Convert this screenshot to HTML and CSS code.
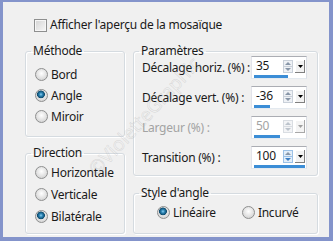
FILE: index.html
```html
<!DOCTYPE html>
<html lang="fr">
<head>
<meta charset="utf-8">
<title>Mosaïque</title>
<link rel="stylesheet" href="styles.css">
</head>
<body>
<div class="window">
  <label class="check-row"><span class="checkbox"></span><span>Afficher l'aperçu de la mosaïque</span></label>
  <div class="main">
    <div class="col col-left">
      <fieldset class="group methode">
        <legend>Méthode</legend>
        <div class="inner">
          <div class="opt"><span class="radio"></span>Bord</div>
          <div class="opt"><span class="radio on"></span>Angle</div>
          <div class="opt"><span class="radio"></span>Miroir</div>
        </div>
      </fieldset>
      <fieldset class="group direction">
        <legend>Direction</legend>
        <div class="inner">
          <div class="opt"><span class="radio"></span>Horizontale</div>
          <div class="opt"><span class="radio"></span>Verticale</div>
          <div class="opt"><span class="radio on"></span>Bilatérale</div>
        </div>
      </fieldset>
    </div>
    <div class="col col-right">
      <fieldset class="group params">
        <legend>Paramètres</legend>
        <div class="inner rows">
          <div class="row">
            <span class="lbl">Décalage horiz. (%) :</span>
            <div class="spin">
              <div class="spin-top"><span class="val">35</span>
                <svg class="arrows" width="10" height="13" viewBox="0 0 10 13"><rect x="0.5" y="0.5" width="9" height="12" fill="#eef1f5" stroke="#c9d0d9"/><line x1="1" y1="6.5" x2="9" y2="6.5" stroke="#c9d0d9"/><path d="M5 2 L8 5 L2 5 Z" fill="#8796a8"/><path d="M2 8 L8 8 L5 11 Z" fill="#8796a8"/></svg>
                <svg class="drop" width="10" height="13" viewBox="0 0 10 13"><rect x="0" y="0" width="10" height="13" fill="#808080"/><rect x="0" y="0" width="9" height="12" fill="#fff"/><rect x="1" y="1" width="8" height="11" fill="#f2f2f2"/><path d="M3 5 L8 5 L5.5 8 Z" fill="#000"/></svg>
              </div>
              <div class="track"><div class="bar" style="width:67.5%"></div></div>
            </div>
          </div>
          <div class="row">
            <span class="lbl">Décalage vert. (%) :</span>
            <div class="spin">
              <div class="spin-top"><span class="val">-36</span>
                <svg class="arrows" width="10" height="13" viewBox="0 0 10 13"><rect x="0.5" y="0.5" width="9" height="12" fill="#eef1f5" stroke="#c9d0d9"/><line x1="1" y1="6.5" x2="9" y2="6.5" stroke="#c9d0d9"/><path d="M5 2 L8 5 L2 5 Z" fill="#8796a8"/><path d="M2 8 L8 8 L5 11 Z" fill="#8796a8"/></svg>
                <svg class="drop" width="10" height="13" viewBox="0 0 10 13"><rect x="0" y="0" width="10" height="13" fill="#808080"/><rect x="0" y="0" width="9" height="12" fill="#fff"/><rect x="1" y="1" width="8" height="11" fill="#f2f2f2"/><path d="M3 5 L8 5 L5.5 8 Z" fill="#000"/></svg>
              </div>
              <div class="track"><div class="bar" style="width:32%"></div></div>
            </div>
          </div>
          <div class="row disabled">
            <span class="lbl">Largeur (%) :</span>
            <div class="spin">
              <div class="spin-top"><span class="val">50</span>
                <svg class="arrows" width="10" height="13" viewBox="0 0 10 13"><rect x="0.5" y="0.5" width="9" height="12" fill="#f3f4f6" stroke="#d9dde2"/><line x1="1" y1="6.5" x2="9" y2="6.5" stroke="#d9dde2"/><path d="M5 2 L8 5 L2 5 Z" fill="#bcc3cc"/><path d="M2 8 L8 8 L5 11 Z" fill="#bcc3cc"/></svg>
                <svg class="drop" width="10" height="13" viewBox="0 0 10 13"><rect x="0" y="0" width="10" height="13" fill="#a8a8a8"/><rect x="0" y="0" width="9" height="12" fill="#fff"/><rect x="1" y="1" width="8" height="11" fill="#f4f4f4"/><path d="M3 5 L8 5 L5.5 8 Z" fill="#a0a0a0"/></svg>
              </div>
              <div class="track"><div class="bar" style="width:50%"></div></div>
            </div>
          </div>
          <div class="row">
            <span class="lbl">Transition (%) :</span>
            <div class="spin">
              <div class="spin-top"><span class="val">100</span>
                <svg class="arrows" width="10" height="13" viewBox="0 0 10 13"><rect x="0.5" y="0.5" width="9" height="12" fill="#e3eef9" stroke="#9cc1e6"/><line x1="1" y1="6.5" x2="9" y2="6.5" stroke="#9cc1e6"/><path d="M5 2 L8 5 L2 5 Z" fill="#8796a8"/><path d="M2 8 L8 8 L5 11 Z" fill="#3c7fc4"/></svg>
                <svg class="drop" width="10" height="13" viewBox="0 0 10 13"><rect x="0" y="0" width="10" height="13" fill="#808080"/><rect x="0" y="0" width="9" height="12" fill="#fff"/><rect x="1" y="1" width="8" height="11" fill="#f2f2f2"/><path d="M3 5 L8 5 L5.5 8 Z" fill="#000"/></svg>
              </div>
              <div class="track"><div class="bar" style="width:100%"></div></div>
            </div>
          </div>
        </div>
      </fieldset>
      <fieldset class="group style">
        <legend>Style d'angle</legend>
        <div class="inner style-row">
          <div class="opt"><span class="radio on"></span>Linéaire</div>
          <div class="opt"><span class="radio"></span>Incurvé</div>
        </div>
      </fieldset>
    </div>
  </div>
  <div class="watermark">©VioletteGraphic</div>
</div>
</body>
</html>
```

FILE: styles.css
```css
* { box-sizing: border-box; }
html, body { margin: 0; padding: 0; }
body {
  width: 333px;
  height: 241px;
  overflow: hidden;
  font-family: "Noto Sans", "Open Sans", sans-serif;
  font-size: 12px;
  letter-spacing: -0.25px;
  color: #1a1a1a;
}
.window {
  position: relative;
  width: 333px;
  height: 241px;
  background: #f0f0f0;
  border-style: solid;
  border-color: #8494cb;
  border-width: 2px 4px 4px 3px;
  padding: 15px 0 0 22px;
  overflow: hidden;
}
.check-row {
  display: flex;
  align-items: center;
  gap: 3px;
  margin-left: 9px;
  height: 16px;
  line-height: 16px;
}
.checkbox {
  width: 13px;
  height: 13px;
  border: 1px solid #8e8f8f;
  background: linear-gradient(135deg, #d4d4d4, #f7f7f7);
  box-shadow: inset 0 0 0 1px #f6f6f6;
}
.main {
  display: flex;
  gap: 8px;
  margin-top: 10px;
}
.col { display: flex; flex-direction: column; }
.col-left { width: 100px; gap: 8px; }
.col-right { width: 185px; gap: 9px; }
.group {
  margin: 0;
  border: 1px solid #d5dbe0;
  border-radius: 3px;
  box-shadow: 1px 1px 0 #fff, inset 1px 1px 0 #fff;
  padding: 0;
  min-width: 0;
}
.group legend {
  margin-left: 5px;
  padding: 0 2px;
  line-height: 16px;
}
.opt {
  display: flex;
  align-items: center;
  gap: 3px;
  height: 21px;
  white-space: nowrap;
}
.radio {
  width: 13px;
  height: 13px;
  border-radius: 50%;
  border: 1px solid #8e8f8f;
  background: radial-gradient(circle at 50% 40%, #ffffff, #d4d4d4 80%);
  flex: none;
}
.radio.on {
  background:
    radial-gradient(circle at 45% 40%, #8fd0ef 0, #2e87b8 1.6px, #0d4a6c 3.6px, rgba(13,74,108,0) 4.2px),
    radial-gradient(circle at 50% 40%, #ffffff, #d4d4d4 80%);
}
.methode { height: 94px; }
.methode .inner { padding: 5px 0 0 9px; }
.direction { height: 89px; }
.direction .inner { padding: 0 0 0 9px; }
.direction .opt { height: 22px; }
.params { height: 133px; }
.rows {
  display: flex;
  flex-direction: column;
  gap: 7px;
  margin-top: -3px;
  padding: 0 10px 0 8px;
}
.row {
  display: flex;
  align-items: center;
  justify-content: space-between;
  height: 23px;
  white-space: nowrap;
}
.row.disabled .lbl, .row.disabled .val { color: #a3a3a3; }
.spin {
  width: 56px;
  height: 23px;
  background: #fff;
  border: 1px solid;
  border-color: #abadb3 #dbdfe6 #e3e9ef #e2e3ea;
  display: flex;
  flex-direction: column;
  flex: none;
}
.spin-top {
  flex: 1;
  display: flex;
  align-items: center;
  padding: 0 1px 0 4px;
  gap: 2px;
}
.val { flex: 1; line-height: 16px; }
.track { height: 3px; margin: 0 1px 0 2px; }
.bar { height: 3px; background: #3b8dd6; }
.style { height: 49px; }
.style-row { display: flex; gap: 26px; padding: 1px 0 0 23px; }
.watermark {
  position: absolute;
  left: 141px;
  top: 114px;
  font-size: 19px;
  letter-spacing: 0;
  color: rgba(0,0,0,0);
  -webkit-text-stroke: 0.5px rgba(160,160,160,0.35);
  transform: translate(-50%, -50%) rotate(-47deg);
  white-space: nowrap;
  pointer-events: none;
}
```
